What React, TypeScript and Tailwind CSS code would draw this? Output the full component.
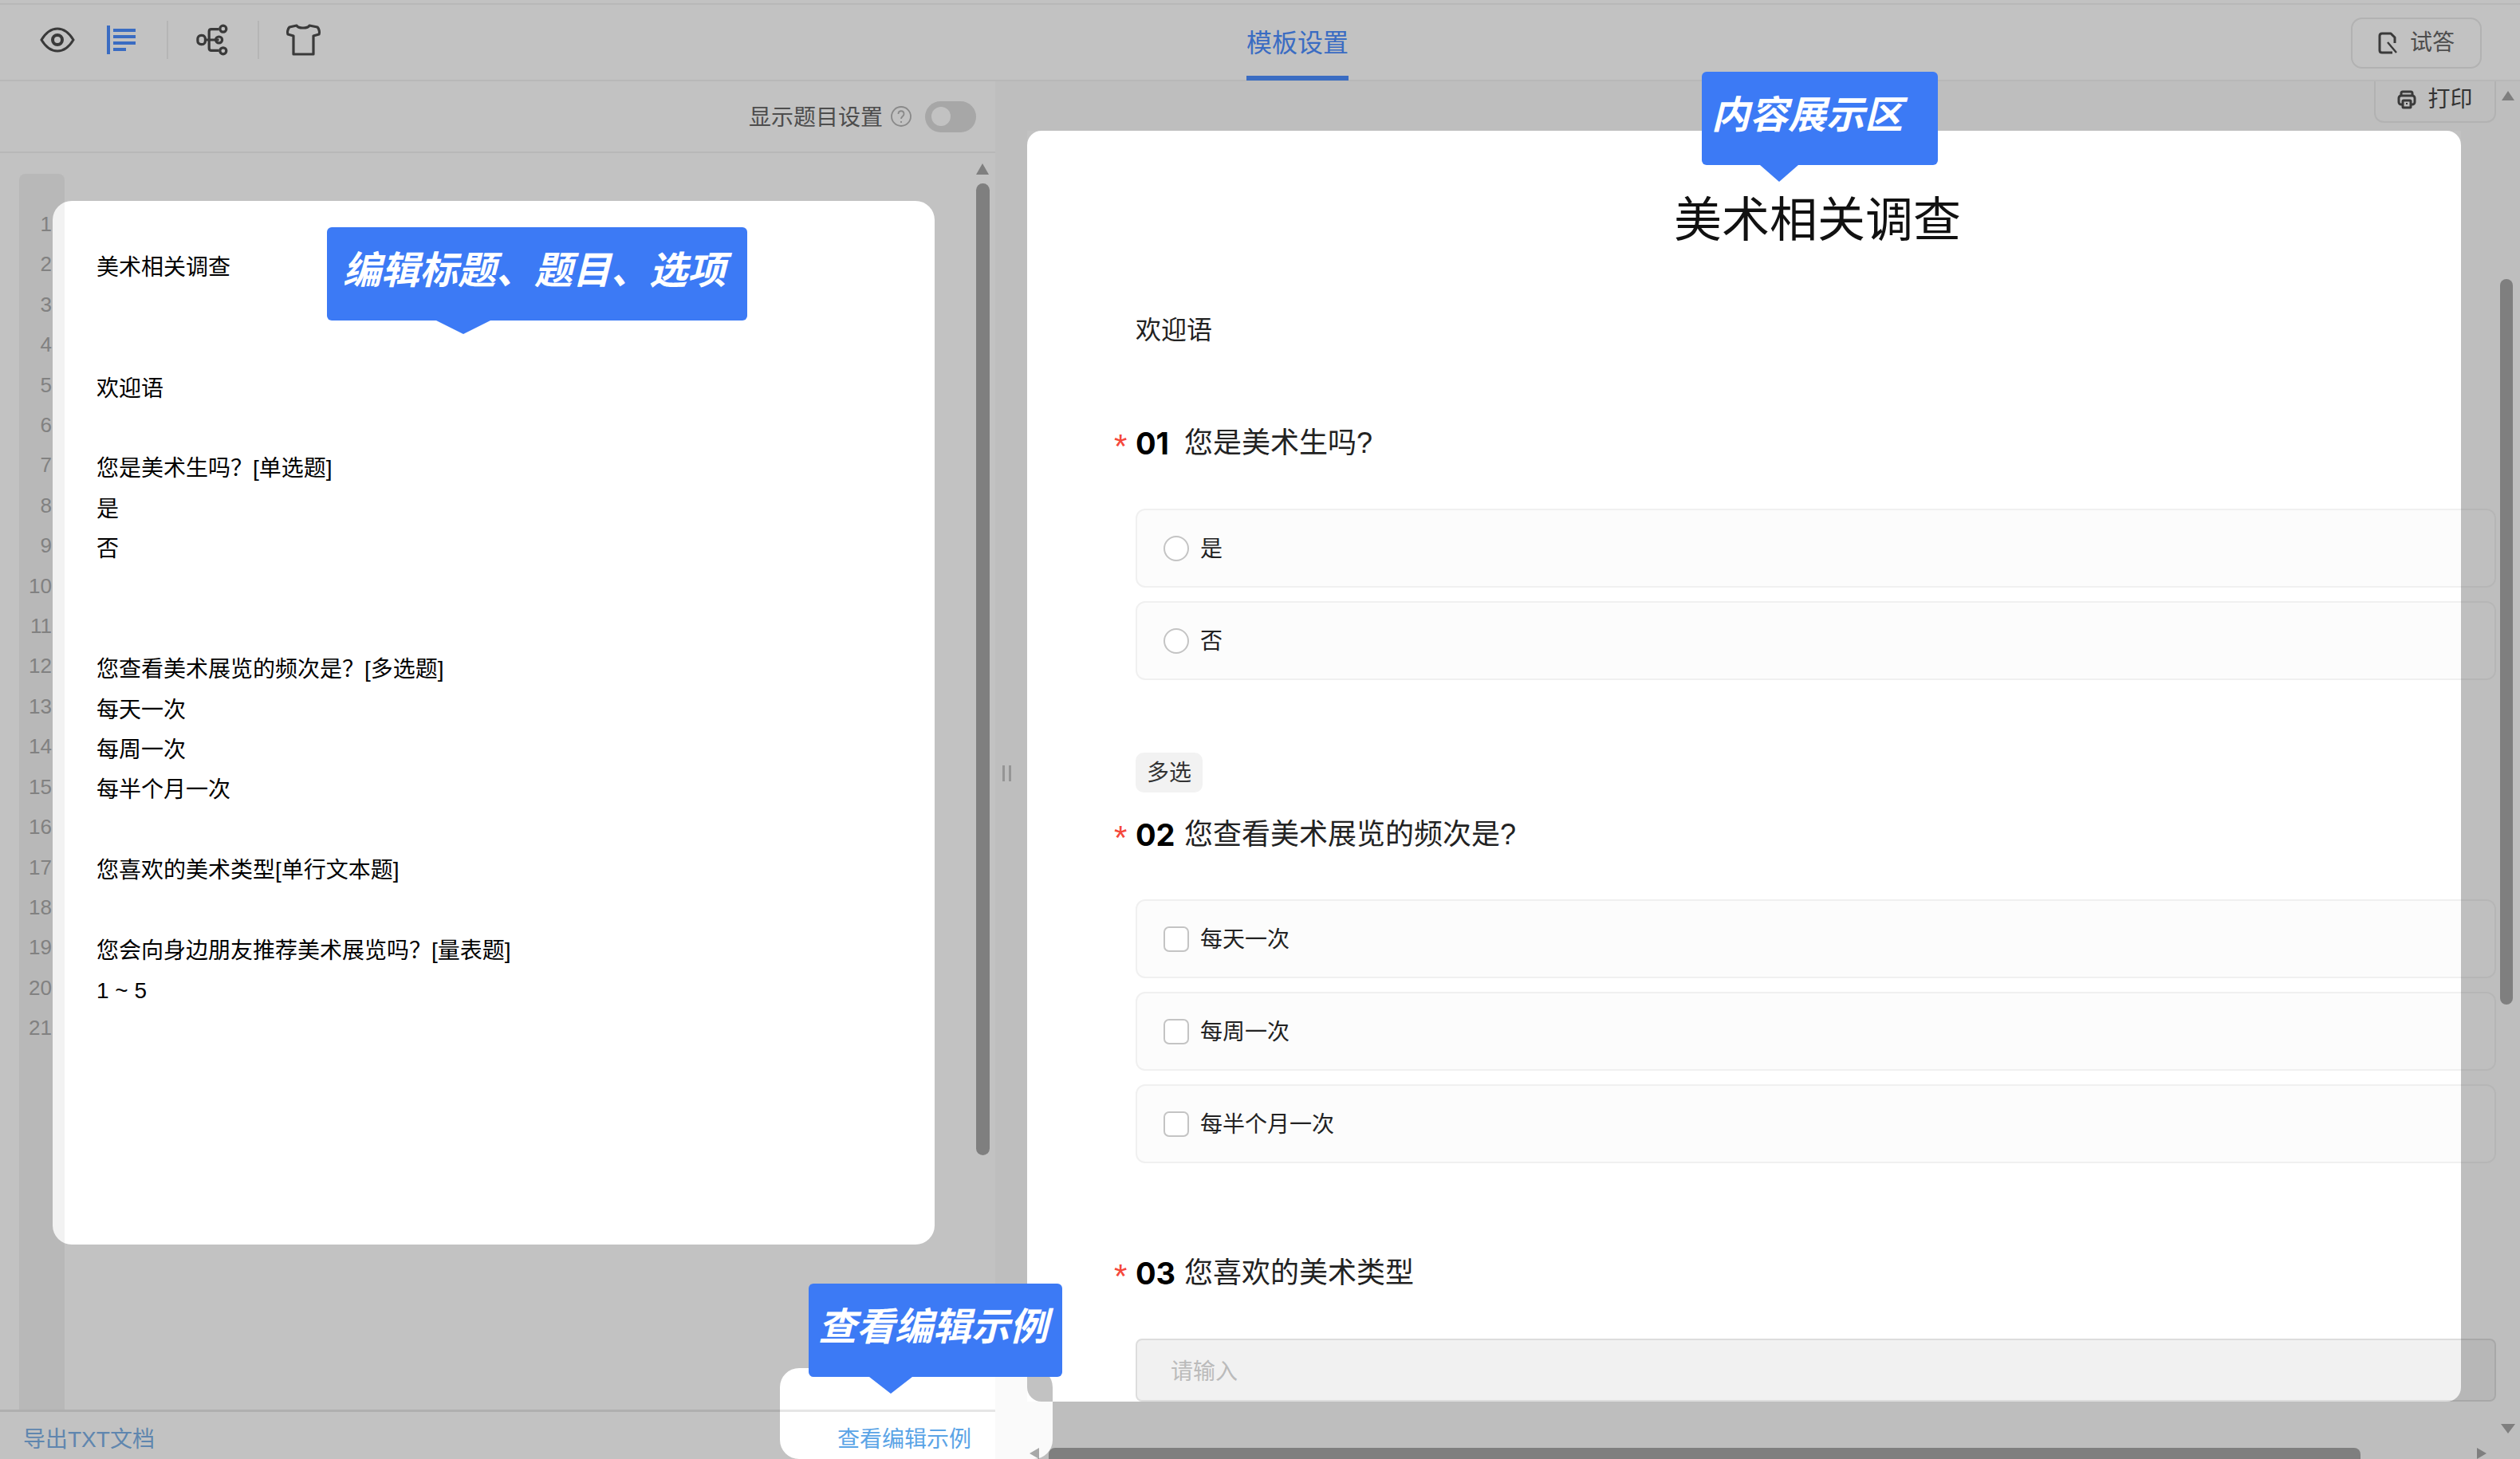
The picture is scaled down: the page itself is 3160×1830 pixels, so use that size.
const FONT = "[font-family:'Liberation_Sans','Noto_Sans_CJK_SC',sans-serif]";

const editorLines = [
  '',
  '美术相关调查',
  '',
  '',
  '欢迎语',
  '',
  '您是美术生吗\uFF1F[单选题]',
  '是',
  '否',
  '',
  '',
  '您查看美术展览的频次是\uFF1F[多选题]',
  '每天一次',
  '每周一次',
  '每半个月一次',
  '',
  '您喜欢的美术类型[单行文本题]',
  '',
  '您会向身边朋友推荐美术展览吗\uFF1F[量表题]',
  '1 ~ 5',
  '',
];

function Radio() {
  return <span className="w-8 h-8 rounded-full border-2 border-[#c4c4c4] bg-white shrink-0" />;
}

function Check() {
  return <span className="w-8 h-8 rounded-[7px] border-2 border-[#c4c4c4] bg-white shrink-0" />;
}

function Option({ label, kind }: { label: string; kind: 'radio' | 'check' }) {
  return (
    <div className="w-[1706px] h-[99px] flex items-center gap-3.5 pl-[33px] rounded-[12px] border-2 border-[#f0f0f0] bg-[#fcfcfc] text-[28px] text-[#222]">
      {kind === 'radio' ? <Radio /> : <Check />}
      <span className="pt-0.5">{label}</span>
    </div>
  );
}

function Question({ no, title, className }: { no: string; title: string; className: string }) {
  return (
    <div className={`flex items-center h-12 -ml-[27px] pt-1 ${className}`}>
      <span className="w-[27px] h-12 text-[42px] leading-[48px] text-[#f5483b] pt-1">*</span>
      <span className="w-[61px] text-[38px] font-bold text-black [font-family:'Inter',sans-serif]">{no}</span>
      <span className="text-[36px] text-[#222]">{title}</span>
    </div>
  );
}

function Callout({ text, className, arrow }: { text: string; className: string; arrow: string }) {
  return (
    <div className={`absolute z-20 bg-[#3c7af5] rounded-[6px] text-white text-[48px] font-bold italic leading-none whitespace-nowrap ${className}`}>
      {text}
      <span className={`absolute top-full w-0 h-0 border-t-[#3c7af5] border-x-transparent ${arrow}`} />
    </div>
  );
}

export default function App() {
  return (
    <div className={`relative w-[3160px] h-[1830px] overflow-hidden bg-white flex flex-col pt-1 ${FONT}`}>
      {/* Toolbar */}
      <div className="h-[98px] shrink-0 flex items-center border-y-2 border-[#f2f2f2]">
        <div className="w-[1563px] shrink-0 h-full flex items-center -mt-[7px]">
          <svg className="ml-[50px] w-[44px] h-[32px]" viewBox="0 0 44 32" fill="none" stroke="#4d4d4d" strokeWidth="3">
            <path d="M2 16C8 6 15 2 22 2s14 4 20 14c-6 10-13 14-20 14S8 26 2 16z" />
            <circle cx="22" cy="16" r="6" strokeWidth="4" />
          </svg>
          <svg className="ml-[40px] w-[36px] h-[36px]" viewBox="0 0 36 36" fill="#4d8eff">
            <rect x="0" y="0" width="4" height="36" />
            <rect x="8" y="4" width="28" height="4" />
            <rect x="8" y="12" width="28" height="4" />
            <rect x="8" y="20" width="28" height="4" />
            <rect x="8" y="28" width="16" height="4" />
          </svg>
          <span className="ml-[39px] w-0.5 h-12 bg-[#eeeeee]" />
          <svg className="ml-[35px] w-[40px] h-[40px]" viewBox="0 0 42 42" fill="none" stroke="#4d4d4d" strokeWidth="3.4">
            <rect x="2" y="15" width="10" height="12" rx="4.5" />
            <path d="M12 21h18M17 21V10c0-2 1-3 3-3h10M17 21v11c0 2 1 3 3 3h10" />
            <circle cx="35.5" cy="6.5" r="4.2" />
            <circle cx="30" cy="21" r="4.2" />
            <circle cx="35.5" cy="35.5" r="4.2" />
          </svg>
          <span className="ml-[37px] w-0.5 h-12 bg-[#eeeeee]" />
          <svg className="ml-[33px] w-[44px] h-[40px]" viewBox="0 0 44 40" fill="none" stroke="#4d4d4d" strokeWidth="3.2" strokeLinejoin="round">
            <path d="M14 2c2 4 14 4 16 0l10 2c2 2 3 6 2 9l-7 2v23H10V15l-7-2c-1-3 0-7 2-9z" />
          </svg>
        </div>
        <div className="h-full flex items-center pt-[6px] border-b-[6px] border-[#4d8eff] text-[32px] text-[#4d8eff] -mb-0.5">模板设置</div>
        <div className="ml-auto mr-[48px] mt-0.5 w-[164px] h-16 flex items-center justify-center gap-4 rounded-[14px] border-2 border-[#eaeaea] text-[28px] text-[#666]">
          <svg className="w-6 h-7" viewBox="0 0 24 28" fill="none" stroke="#4d4d4d" strokeWidth="3" strokeLinejoin="round">
            <path d="M21 14V7l-5-5H5Q2 2 2 5v18q0 3 3 3h13" />
            <path d="M12 13l11 13" strokeWidth="2.4" />
          </svg>
          试答
        </div>
      </div>

      <div className="flex-1 flex min-h-0">
        {/* Text editor side */}
        <div className="w-[1248px] shrink-0 flex flex-col relative">
          <div className="h-[90px] shrink-0 flex items-center justify-end pr-6 border-b-2 border-[#f2f2f2] text-[28px] text-[#666]">
            <span className="pt-1">显示题目设置</span>
            <svg className="ml-2.5 w-[26px] h-[26px]" viewBox="0 0 26 26" fill="none" stroke="#b4b4b4" strokeWidth="1.8">
              <circle cx="13" cy="13" r="12" />
              <path d="M9.5 10c0-5 7-5 7 0 0 3-3.5 3-3.5 6M13 19v2" />
            </svg>
            <span className="ml-[17px] w-16 h-[39px] rounded-full bg-[#dcdcdc] flex items-center pl-2">
              <span className="w-6 h-6 rounded-full bg-white" />
            </span>
          </div>
          <div className="flex-1 flex min-h-0 pt-[26px]">
            <div className="ml-6 w-[57px] shrink-0 bg-[#f2f2f2] rounded-t-[8px] pt-[38px] text-right pr-4 text-[26px] leading-[50.4px] text-[#aaaaaa]">
              {editorLines.map((_, i) => (
                <div key={i}>{i + 1}</div>
              ))}
            </div>
            <div className="pl-10 pt-[43px] text-[28px] leading-[50.4px] text-black">
              {editorLines.map((line, i) => (
                <div key={i} className="h-[50.4px]">{line}</div>
              ))}
            </div>
          </div>
          <div className="h-[62px] shrink-0 flex items-center pt-[10px] border-t-[3px] border-[#e6e6e6] bg-white">
            <span className="ml-[29px] text-[28px] text-[#7db1e6]">导出TXT文档</span>
            <span className="ml-[856px] text-[28px] text-[#5ba4e6]">查看编辑示例</span>
          </div>
          {/* editor scrollbar */}
          <span className="absolute left-[1224px] top-[103px] w-0 h-0 border-b-[14px] border-b-[#a8a8a8] border-x-[8px] border-x-transparent" />
          <span className="absolute left-[1224px] top-[128px] w-[17px] h-[1219px] rounded-full bg-[#a8a8a8]" />
        </div>

        {/* Preview side */}
        <div className="flex-1 relative bg-[#fafafa] overflow-hidden">
          <div className="ml-[40px] mt-[62px] w-[1798px] h-[1594px] bg-white pl-[136px]">
            <h1 className="-ml-[136px] w-[1982px] pt-[71px] text-center text-[60px] leading-[84px] font-normal text-[#111]">美术相关调查</h1>
            <p className="mt-[71px] text-[32px] leading-[48px] text-[#222]">欢迎语</p>
            <Question no="01" title="您是美术生吗?" className="mt-[92px]" />
            <div className="mt-[60px] flex flex-col gap-[17px]">
              <Option kind="radio" label="是" />
              <Option kind="radio" label="否" />
            </div>
            <span className="mt-[91px] w-[84px] h-[50px] flex items-center justify-center pt-0.5 rounded-[10px] bg-[#f2f2f2] text-[28px] text-[#333]">多选</span>
            <Question no="02" title="您查看美术展览的频次是?" className="mt-[27px]" />
            <div className="mt-[59px] flex flex-col gap-[17px]">
              <Option kind="check" label="每天一次" />
              <Option kind="check" label="每周一次" />
              <Option kind="check" label="每半个月一次" />
            </div>
            <Question no="03" title="您喜欢的美术类型" className="mt-[112px]" />
            <div className="mt-[60px] w-[1706px] h-[79px] flex items-center pl-[42px] pt-1 rounded-[8px] border-2 border-[#dddddd] bg-[#f1f1f1] text-[28px] text-[#bbbbbb]">请输入</div>
          </div>

          {/* print button floats over the preview */}
          <div className="absolute top-0 left-[1729px] w-[153px] h-[52px] flex items-center justify-center gap-3.5 pb-1 rounded-b-[12px] border-x-2 border-b-2 border-[#eaeaea] text-[28px] text-[#444]">
            <svg className="w-6 h-6" viewBox="0 0 24 24" fill="none" stroke="#4d4d4d" strokeWidth="3">
              <path d="M5 7V4q0-2 2-2h10q2 0 2 2v3" />
              <rect x="2" y="7" width="20" height="11" rx="3" />
              <rect x="7" y="13" width="10" height="9" rx="1" fill="#fafafa" />
              <rect x="11" y="16" width="2" height="2" fill="#4d4d4d" stroke="none" />
            </svg>
            打印
          </div>

          {/* splitter handle */}
          <span className="absolute left-[9px] top-[858px] flex gap-[5px]">
            <span className="w-[3px] h-5 bg-[#c4c4c4]" />
            <span className="w-[3px] h-5 bg-[#c4c4c4]" />
          </span>

          {/* preview scrollbars */}
          <span className="absolute right-[7px] top-[12px] w-0 h-0 border-b-[12px] border-b-[#a8a8a8] border-x-[8px] border-x-transparent" />
          <span className="absolute right-[9px] top-[248px] w-[16px] h-[910px] rounded-full bg-[#a8a8a8]" />
          <span className="absolute right-[6px] bottom-[32px] w-0 h-0 border-t-[12px] border-t-[#a8a8a8] border-x-[9px] border-x-transparent" />
          <span className="absolute left-[43px] bottom-0 w-0 h-0 border-r-[12px] border-r-[#a8a8a8] border-y-[7px] border-y-transparent" />
          <span className="absolute left-[67px] bottom-0 w-[1645px] h-[14px] rounded-t-[8px] bg-[#a8a8a8]" />
          <span className="absolute left-[1858px] bottom-0 w-0 h-0 border-l-[12px] border-l-[#a8a8a8] border-y-[7px] border-y-transparent" />
        </div>
      </div>

      {/* Guide mask: evenodd holes, overlap of two holes stays dim */}
      <div className="absolute inset-0 z-10 bg-black/[.24] [clip-path:path(evenodd,'M0_0H3160V1830H0Z_M90_252H1148A24_24_0_0_1_1172_276V1537A24_24_0_0_1_1148_1561H90A24_24_0_0_1_66_1537V276A24_24_0_0_1_90_252Z_M1306_164H3068A18_18_0_0_1_3086_182V1740A18_18_0_0_1_3068_1758H1306A18_18_0_0_1_1288_1740V182A18_18_0_0_1_1306_164Z_M1002_1716H1296A24_24_0_0_1_1320_1740V1806A24_24_0_0_1_1296_1830H1002A24_24_0_0_1_978_1806V1740A24_24_0_0_1_1002_1716Z')]" />

      <Callout
        text="编辑标题、题目、选项"
        className="left-[410px] top-[285px] w-[527px] h-[117px] pl-5 pt-[31px]"
        arrow="left-[137px] border-t-[17px] border-x-[34px]"
      />
      <Callout
        text="内容展示区"
        className="left-[2134px] top-[90px] w-[296px] h-[117px] pl-3 pt-[31px]"
        arrow="left-[73px] border-t-[21px] border-x-[24px]"
      />
      <Callout
        text="查看编辑示例"
        className="left-[1014px] top-[1610px] w-[318px] h-[117px] pl-3 pt-[31px]"
        arrow="left-[76px] border-t-[21px] border-x-[27px]"
      />
    </div>
  );
}
